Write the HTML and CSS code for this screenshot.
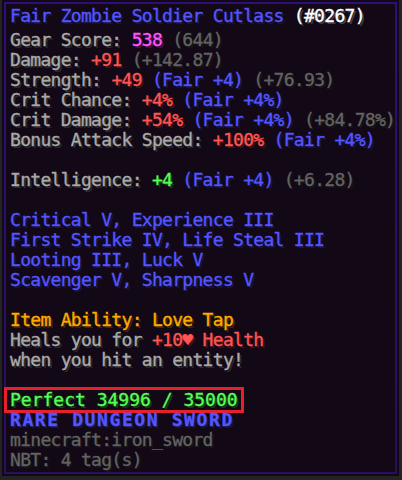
FILE: index.html
```html
<!DOCTYPE html>
<html>
<head>
<meta charset="utf-8">
<link rel="stylesheet" href="styles.css">
</head>
<body>
<div class="tip">
  <div class="frame">
    <div class="line title"><span class="blue">Fair Zombie Soldier Cutlass</span> <span class="white">(#0267)</span></div>
    <div class="line"><span class="gray">Gear Score: </span><span class="pink">538</span> <span class="dark">(644)</span></div>
    <div class="line"><span class="gray">Damage: </span><span class="red">+91</span> <span class="dark">(+142.87)</span></div>
    <div class="line"><span class="gray">Strength: </span><span class="red">+49</span> <span class="blue">(Fair +4)</span> <span class="dark">(+76.93)</span></div>
    <div class="line"><span class="gray">Crit Chance: </span><span class="red">+4%</span> <span class="blue">(Fair +4%)</span></div>
    <div class="line"><span class="gray">Crit Damage: </span><span class="red">+54%</span> <span class="blue">(Fair +4%)</span> <span class="dark">(+84.78%)</span></div>
    <div class="line"><span class="gray">Bonus Attack Speed: </span><span class="red">+100%</span> <span class="blue">(Fair +4%)</span></div>
    <div class="line blank"></div>
    <div class="line"><span class="gray">Intelligence: </span><span class="green">+4</span> <span class="blue">(Fair +4)</span> <span class="dark">(+6.28)</span></div>
    <div class="line blank"></div>
    <div class="line blue">Critical V, Experience III</div>
    <div class="line blue">First Strike IV, Life Steal III</div>
    <div class="line blue">Looting III, Luck V</div>
    <div class="line blue">Scavenger V, Sharpness V</div>
    <div class="line blank"></div>
    <div class="line gold">Item Ability: Love Tap</div>
    <div class="line"><span class="gray">Heals you for </span><span class="red">+10♥ Health</span></div>
    <div class="line gray">when you hit an entity!</div>
    <div class="line blank"></div>
    <div class="line"><span class="green boxed">Perfect 34996 / 35000</span></div>
    <div class="line blue rarity">RARE DUNGEON SWORD</div>
    <div class="line dark">minecraft:iron_sword</div>
    <div class="line dark">NBT: 4 tag(s)</div>
  </div>
</div>
</body>
</html>
```

FILE: styles.css
```css
html, body {
  margin: 0;
  padding: 0;
}
body {
  width: 402px;
  height: 480px;
  background: #232323;
  overflow: hidden;
  font-family: "DejaVu Sans Mono", monospace;
  font-size: 18px;
  letter-spacing: -0.7px;
  -webkit-text-stroke: 0.35px currentColor;
}
.tip {
  margin-left: 2px;
  width: 397px;
  height: 476px;
  box-sizing: border-box;
  padding: 2px;
  background: #130816;
}
.frame {
  box-sizing: border-box;
  height: 100%;
  border: 2px solid #2c0e72;
  border-image: linear-gradient(#2e0f7a, #27105c) 1;
  padding: 2px 4px;
}
.line {
  height: 20px;
  line-height: 20px;
  white-space: pre;
}
.title {
  margin-bottom: 4px;
}
.blue { color: #5555ff; text-shadow: 2px 2px 0 #151540; }
.white { color: #ffffff; text-shadow: 2px 2px 0 #3f3f3f; }
.gray { color: #aaaaaa; text-shadow: 2px 2px 0 #2a2a2a; }
.dark { color: #636363; text-shadow: 2px 2px 0 #151515; }
.pink { color: #ff55ff; text-shadow: 2px 2px 0 #3f153f; }
.red { color: #ff5555; text-shadow: 2px 2px 0 #3f1515; }
.green { color: #55ff55; text-shadow: 2px 2px 0 #153f15; }
.gold { color: #ffaa00; text-shadow: 2px 2px 0 #3f2a00; }
.rarity {
  font-weight: bold;
  letter-spacing: 1.6px;
}
.boxed {
  display: inline-block;
  letter-spacing: 0;
  line-height: 20px;
  padding: 0 3px;
  margin-left: -3px;
  vertical-align: 2px;
  outline: 3px solid #e8202a;
}
```
